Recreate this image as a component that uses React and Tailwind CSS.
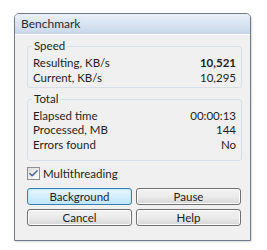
import { Check } from 'lucide-react';

const font = { fontFamily: 'Lato, "Noto Sans", sans-serif' };

const GroupBox = ({ title, rows, className }) => (
  <div className={`relative border border-[#d5dfe5] rounded-[3px] ml-[12px] mr-[8px] px-[5px] ${className}`}>
    <span className="absolute -top-[8px] left-[4px] bg-[#f0f0f0] px-[2px] leading-[14px] text-[#1e1e1e]">{title}</span>
    {rows}
  </div>
);

const Row = ({ label, value, bold, h = 'h-[15px]' }) => (
  <div className={`flex items-center justify-between leading-[14px] ${h}`}>
    <span>{label}</span>
    <span className={bold ? 'font-bold' : ''}>{value}</span>
  </div>
);

const Btn = ({ children, active }) => (
  <button
    className={`h-[17px] flex-1 rounded-[3px] border text-[11.5px] leading-[14px] text-[#1e1e1e] ${
      active
        ? 'border-[#3c7fb1] bg-gradient-to-b from-[#eaf6fd] to-[#bee6fd] shadow-[inset_0_0_0_1px_#bde8fb]'
        : 'border-[#707070] bg-gradient-to-b from-[#f2f2f2] via-[#ebebeb] to-[#d6d6d6] shadow-[inset_0_0_0_1px_#fcfcfc]'
    }`}
  >
    {children}
  </button>
);

export default function App() {
  return (
    <div className="w-[267px] h-[250px] bg-white pt-[13px] pl-[14px]" style={font}>
      <div className="w-[237px] h-[228px] border border-[#707b88] rounded-t-[5px] bg-[#f0f0f0] text-[11.5px] text-[#1e1e1e] overflow-hidden flex flex-col shadow-[1px_1px_2px_rgba(0,0,0,0.15)]">
        <div className="h-[20px] bg-gradient-to-b from-[#e9f0f8] to-[#c9d9eb] border-b border-[#c4d2e2] flex items-center pl-[6px] text-[#1e2a3a] text-[12px] leading-[14px]">
          Benchmark
        </div>
        <div className="border-t border-white h-[12px]" />
        <GroupBox
          title="Speed"
          className="h-[42px] pt-[8px]"
          rows={
            <>
              <Row label="Resulting, KB/s" value="10,521" bold />
              <Row label="Current, KB/s" value="10,295" />
            </>
          }
        />
        <div className="h-[11px]" />
        <GroupBox
          title="Total"
          className="h-[62px] pt-[8px]"
          rows={
            <>
              <Row label="Elapsed time" value="00:00:13" h="h-[15px]" />
              <Row label="Processed, MB" value="144" h="h-[14px]" />
              <Row label="Errors found" value="No" h="h-[15px]" />
            </>
          }
        />
        <div className="flex items-center h-[13px] ml-[12px] mt-[6px] gap-[3px] leading-[14px]">
          <div className="w-[13px] h-[13px] border border-[#8e8f8f] bg-gradient-to-br from-[#dcdcdc] to-white flex items-center justify-center">
            <Check className="w-[11px] h-[11px] text-[#4a5f97]" strokeWidth={3} />
          </div>
          <span>Multithreading</span>
        </div>
        <div className="flex flex-col gap-[4px] ml-[12px] mr-[9px] mt-[8px]">
          <div className="flex gap-[4px]">
            <Btn active>Background</Btn>
            <Btn>Pause</Btn>
          </div>
          <div className="flex gap-[4px]">
            <Btn>Cancel</Btn>
            <Btn>Help</Btn>
          </div>
        </div>
      </div>
    </div>
  );
}
